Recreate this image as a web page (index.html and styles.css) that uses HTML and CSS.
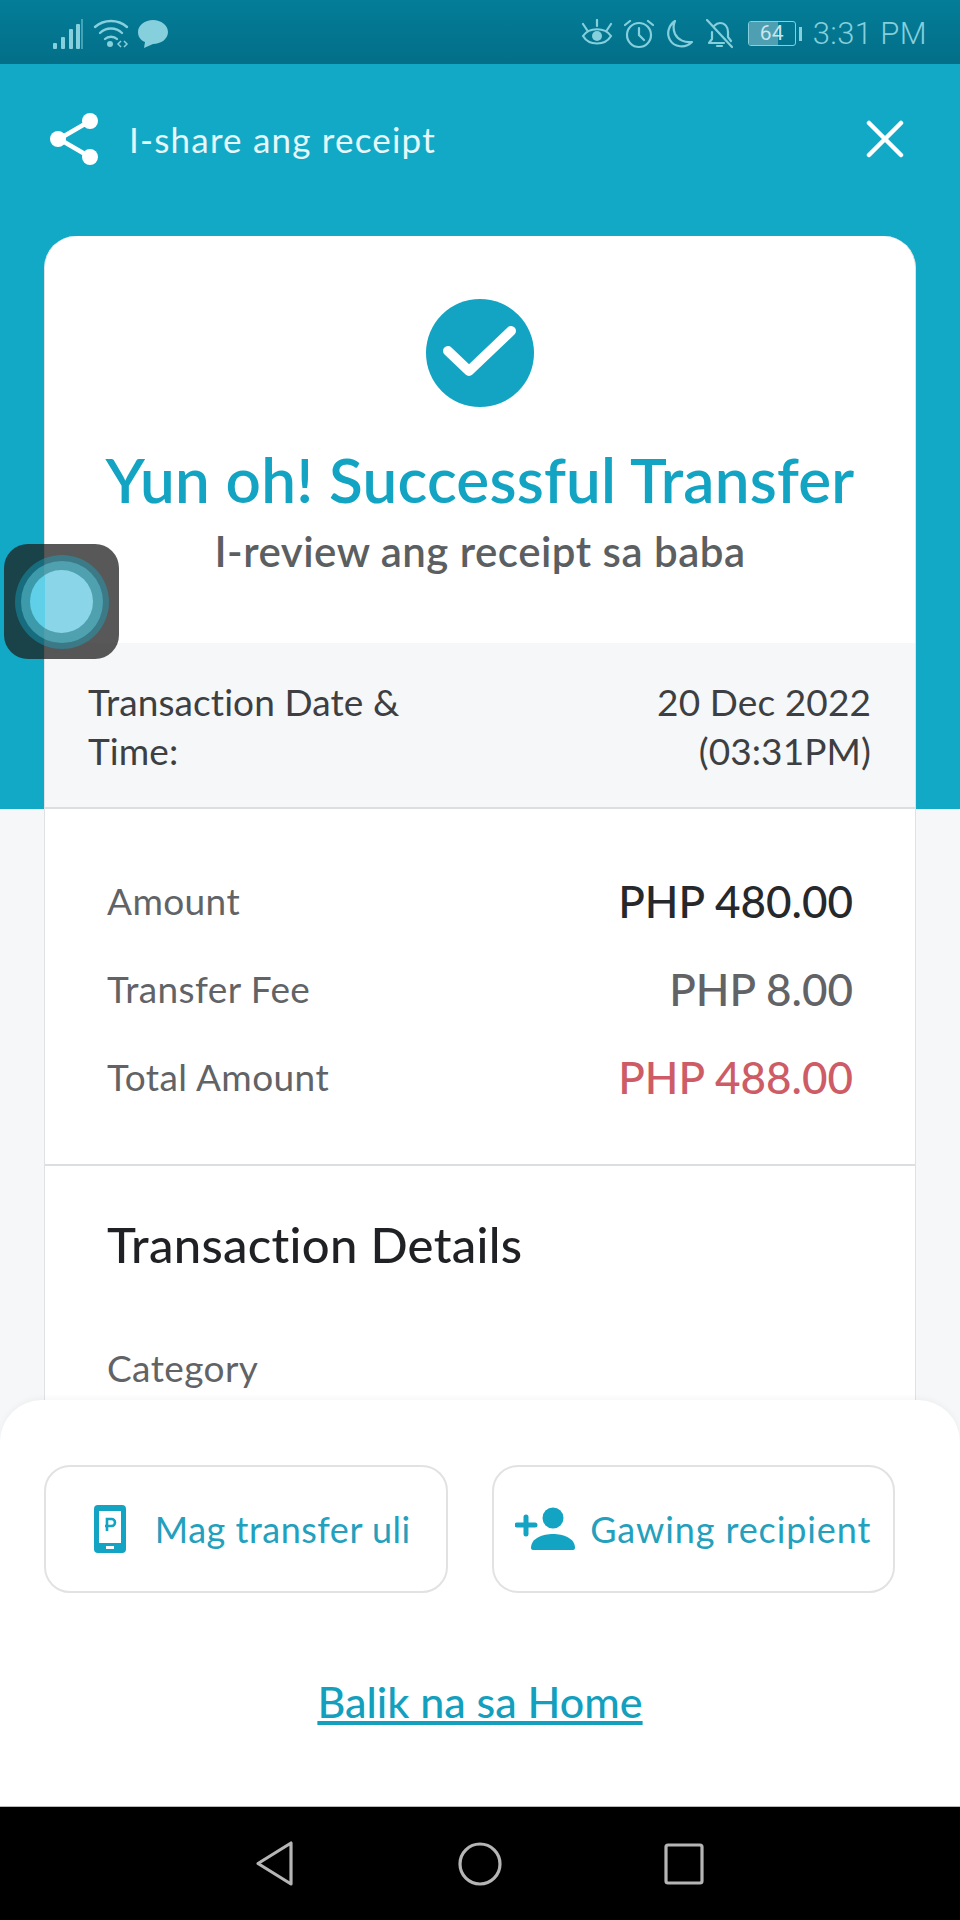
FILE: index.html
```html
<!DOCTYPE html>
<html lang="tl">
<head>
<meta charset="utf-8">
<title>Successful Transfer</title>
<link rel="stylesheet" href="styles.css">
</head>
<body>
<div class="phone">
  <header class="status">
    <div class="status-left">
      <svg class="ic-signal" viewBox="0 0 30 30"><g fill="#86cfdc"><rect x="0" y="24" width="4" height="6" rx="1"/><rect x="8" y="18" width="4" height="12" rx="1"/><rect x="16" y="10" width="4" height="20" rx="1"/><rect x="23" y="5" width="4" height="25" rx="1"/></g><rect x="28" y="0" width="2" height="30" fill="#86cfdc" opacity=".5"/></svg>
      <svg class="ic-wifi" viewBox="0 0 36 30"><g fill="none" stroke="#86cfdc" stroke-width="2.4" stroke-linecap="round"><path d="M2 8C11 0 25 0 34 8"/><path d="M7 14C13 8 23 8 29 14"/><path d="M12 20C15 17 21 17 24 20"/></g><circle cx="17" cy="25" r="3" fill="#86cfdc"/><path d="M28 22l-3 3 3 3M31 22l3 3-3 3" fill="none" stroke="#86cfdc" stroke-width="1.5"/></svg>
      <svg class="ic-msg" viewBox="0 0 32 30"><path d="M16 1C24 1 31 6 31 13S24 25 16 25L7 29 8 23C3 21 1 17 1 13 1 6 8 1 16 1Z" fill="#86cfdc"/></svg>
    </div>
    <div class="status-right">
      <svg class="ic-eye" viewBox="0 0 32 30"><g fill="none" stroke="#86cfdc" stroke-width="2.2"><path d="M2 17C8 8 24 8 30 17 24 27 8 27 2 17Z"/><path d="M2 5l4 6M16 1v6M30 5l-4 6" stroke-linecap="round"/></g><circle cx="16" cy="17" r="5" fill="#86cfdc"/></svg>
      <svg class="ic-alarm" viewBox="0 0 30 30"><g fill="none" stroke="#86cfdc" stroke-width="2.2" stroke-linecap="round"><circle cx="15" cy="16" r="12"/><path d="M15 9v7l5 5M1 6l5-4M29 6l-5-4"/></g></svg>
      <svg class="ic-moon" viewBox="0 0 30 30"><path d="M11 2C5 6 2 14 6 21 10 28 21 30 28 23 21 24 14 21 11 15 9 10 9 6 11 2Z" fill="none" stroke="#86cfdc" stroke-width="2.2" stroke-linejoin="round"/></svg>
      <svg class="ic-bell" viewBox="0 0 27 30"><g fill="none" stroke="#86cfdc" stroke-width="2.2" stroke-linecap="round" stroke-linejoin="round"><path d="M8 7C10 5 12 4 14 4 19 4 22 8 22 13V18L25 22M18 24H3L6 20V13"/><path d="M1 1L26 28"/><path d="M11 27H16"/></g></svg>
      <div class="battery"><span class="battery-fill"></span><span class="battery-num">64</span></div>
      <span class="battery-tip"></span>
      <span class="time">3:31 PM</span>
    </div>
  </header>

  <main class="main">
    <div class="topbar">
      <div class="share">
        <svg class="ic-share" viewBox="0 0 50 54"><g stroke="#fff" stroke-width="4.5"><path d="M40 9L9 27 40 45" fill="none"/></g><g fill="#fff"><circle cx="40" cy="9" r="8"/><circle cx="8" cy="27" r="8"/><circle cx="40" cy="45" r="8"/></g></svg>
        <span class="share-label">I-share ang receipt</span>
      </div>
      <svg class="ic-close" viewBox="0 0 38 38"><path d="M3 3L35 35M35 3L3 35" stroke="#fff" stroke-width="4.5" stroke-linecap="round"/></svg>
    </div>

    <section class="card">
      <div class="hero">
        <svg class="ic-check" viewBox="0 0 108 108"><circle cx="54" cy="54" r="54" fill="#12a4c2"/><path d="M22 52L43 72 85 32" fill="none" stroke="#fff" stroke-width="10" stroke-linecap="round" stroke-linejoin="round"/></svg>
        <h1 class="title">Yun oh! Successful Transfer</h1>
        <p class="subtitle">I-review ang receipt sa baba</p>
      </div>
      <div class="date-band">
        <span class="date-label">Transaction Date &amp;<br>Time:</span>
        <span class="date-value">20 Dec 2022<br>(03:31PM)</span>
      </div>
      <div class="amounts">
        <div class="row"><span class="row-label">Amount</span><span class="row-value dark">PHP 480.00</span></div>
        <div class="row"><span class="row-label">Transfer Fee</span><span class="row-value grey">PHP 8.00</span></div>
        <div class="row"><span class="row-label">Total Amount</span><span class="row-value red">PHP 488.00</span></div>
      </div>
      <div class="details">
        <h2 class="details-title">Transaction Details</h2>
        <div class="row-label">Category</div>
      </div>
    </section>
  </main>

  <section class="sheet">
    <div class="actions">
      <div class="action action-transfer">
        <svg class="ic-phone" viewBox="0 0 32 48"><path fill-rule="evenodd" d="M4 0H28A4 4 0 0 1 32 4V44A4 4 0 0 1 28 48H4A4 4 0 0 1 0 44V4A4 4 0 0 1 4 0ZM5 6V38H27V6ZM12 41V44H20V41Z" fill="#12a4c2"/><path d="M13 26V14H17.5A3.5 3.5 0 0 1 17.5 21H11" fill="none" stroke="#12a4c2" stroke-width="2.6"/></svg>
        <span class="action-label">Mag transfer uli</span>
      </div>
      <div class="action action-recipient">
        <svg class="ic-person" viewBox="0 0 60 44"><g fill="#12a4c2"><circle cx="38" cy="11" r="10.5"/><path d="M16 41C16 31 28 27 38 27S60 31 60 41C60 42 59 43 58 43H18C17 43 16 42 16 41Z"/></g><path d="M2 18H20M11 10V27" stroke="#12a4c2" stroke-width="5" stroke-linecap="round"/></svg>
        <span class="action-label">Gawing recipient</span>
      </div>
    </div>
    <a class="home-link" href="#">Balik na sa Home</a>
  </section>

  <nav class="navbar">
    <svg class="ic-nav-back" viewBox="0 0 39 47"><path d="M36 3V44L3 23.5Z" fill="none" stroke="#b5b5b5" stroke-width="3.2" stroke-linejoin="round"/></svg>
    <svg class="ic-nav-home" viewBox="0 0 44 44"><circle cx="22" cy="22" r="20" fill="none" stroke="#b5b5b5" stroke-width="3.2"/></svg>
    <svg class="ic-nav-recent" viewBox="0 0 40 42"><rect x="2" y="2" width="36" height="38" rx="2" fill="none" stroke="#b5b5b5" stroke-width="3.2"/></svg>
  </nav>

  <div class="assist"><span class="assist-ring outer"><span class="assist-ring middle"><span class="assist-dot"></span></span></span></div>
</div>
</body>
</html>
```
FILE: styles.css
```css
* { box-sizing: border-box; }
html, body { margin: 0; padding: 0; }
body { font-family: "Lato", "Noto Sans", sans-serif; }
.phone { position: relative; width: 960px; height: 1920px; display: flex; flex-direction: column; overflow: hidden; background: #fff; }

.status { flex: 0 0 64px; background: linear-gradient(#037d99, #036f88); display: flex; justify-content: space-between; align-items: center; padding: 3px 33px 0 53px; color: #86cfdc; }
.status-left, .status-right { display: flex; align-items: center; }
.status svg { display: block; }
.ic-signal { width: 30px; height: 30px; margin-right: 10px; }
.ic-wifi { width: 36px; height: 30px; margin-right: 8px; }
.ic-msg { width: 32px; height: 30px; }
.ic-eye { width: 32px; height: 30px; margin-right: 11px; }
.ic-alarm { width: 30px; height: 30px; margin-right: 10px; }
.ic-moon { width: 30px; height: 30px; margin-right: 12px; }
.ic-bell { width: 27px; height: 30px; margin-right: 15px; }
.battery { position: relative; width: 48px; height: 25px; border: 1px solid #86cfdc; border-radius: 3px; overflow: hidden; text-align: center; }
.battery-fill { position: absolute; left: 0; top: 0; bottom: 0; width: 64%; background: #4f9fb3; }
.battery-num { position: relative; display: block; font-family: "Roboto", sans-serif; font-size: 21px; line-height: 23px; color: #c9e6ec; }
.battery-tip { width: 3px; height: 14px; margin: 0 11px 0 3px; background: #86cfdc; }
.time { font-family: "Roboto", sans-serif; font-size: 31px; font-weight: 300; line-height: 30px; letter-spacing: .4px; }

.main { height: 1376px; flex: none; overflow: hidden; background: linear-gradient(#12a9c6 745px, #f5f7f9 745px); padding: 0 44px; }
.topbar { height: 172px; display: flex; align-items: center; justify-content: space-between; padding: 0 10px 23px 6px; }
.share { display: flex; align-items: center; gap: 29px; }
.ic-share { width: 50px; height: 54px; display: block; }
.share-label { font-size: 35px; color: #e6f6f9; letter-spacing: 1.2px; }
.ic-close { width: 38px; height: 38px; display: block; margin-right: 2px; }

.card { background: #fff; border-radius: 32px 32px 0 0; border: 1px solid #dfe2e5; border-top: 0; height: 1300px; }
.hero { display: flex; flex-direction: column; align-items: center; padding-top: 63px; height: 407px; }
.ic-check { width: 108px; height: 108px; display: block; }
.title { margin: 37px 0 0; font-size: 62px; line-height: 70px; font-weight: 600; color: #12a4c2; white-space: nowrap; letter-spacing: .2px; }
.subtitle { margin: 12px 0 0; font-size: 42px; line-height: 50px; font-weight: 600; color: #5c5f62; letter-spacing: .5px; }
.date-band { height: 166px; background: #f5f7f9; border-bottom: 2px solid #dcdfe2; display: flex; justify-content: space-between; padding: 34px 44px 0 43px; font-size: 37px; line-height: 49px; color: #3d3f42; letter-spacing: .1px; }
.date-value { text-align: right; }
.amounts { height: 357px; border-bottom: 2px solid #dcdfe2; padding: 48px 62px 0; display: flex; flex-direction: column; }
.row { display: flex; justify-content: space-between; align-items: center; height: 88px; }
.row-label { font-size: 37px; line-height: 42px; color: #616366; letter-spacing: .4px; }
.row-value { font-size: 44px; font-weight: 500; }
.dark { color: #26282b; }
.grey { color: #616366; }
.red { color: #cd5c66; }
.details { padding: 50px 62px 0; }
.details-title { margin: 0 0 75px; font-size: 49px; line-height: 56px; font-weight: 500; color: #1f2124; letter-spacing: .3px; }

.sheet { position: relative; z-index: 1; flex: none; height: 406px; margin-top: -40px; background: #fff; border-radius: 42px 42px 0 0; padding: 65px 65px 0 44px; display: flex; flex-direction: column; align-items: center; box-shadow: 0 -2px 6px rgba(0,0,0,.04); }
.actions { display: grid; grid-template-columns: 1fr 1fr; gap: 44px; width: 100%; }
.action { min-width: 0; height: 128px; border: 2px solid #e2e2e2; border-radius: 26px; display: flex; align-items: center; justify-content: center; }
.action-transfer { gap: 29px; padding-left: 13px; }
.action-recipient { gap: 15px; }
.action-label { font-size: 36px; color: #23a0bd; letter-spacing: .5px; white-space: nowrap; }
.action-recipient .action-label { letter-spacing: .9px; }
.ic-phone { width: 32px; height: 48px; display: block; }
.ic-person { width: 60px; height: 44px; display: block; }
.home-link { margin: 84px 0 0 21px; font-size: 43px; line-height: 50px; font-weight: 500; color: #12a0be; text-decoration: underline; }

.navbar { flex: 1; background: #000; border-top: 1px solid #bbb; display: flex; align-items: center; }
.ic-nav-back { width: 39px; height: 47px; margin-left: 255px; }
.ic-nav-home { width: 44px; height: 44px; margin-left: 164px; }
.ic-nav-recent { width: 40px; height: 42px; margin-left: 162px; }

.assist { position: absolute; left: 4px; top: 544px; width: 115px; height: 115px; border-radius: 24px; background: rgba(30,30,30,.74); display: flex; align-items: center; justify-content: center; z-index: 2; }
.assist-ring { border-radius: 50%; display: flex; align-items: center; justify-content: center; }
.outer { width: 94px; height: 94px; background: rgba(18,169,198,.42); }
.middle { width: 82px; height: 82px; background: rgba(100,200,215,.5); }
.assist-dot { width: 63px; height: 63px; border-radius: 50%; background: linear-gradient(90deg, #5fd0e8 24%, #8bd5e9 24%); }
```
